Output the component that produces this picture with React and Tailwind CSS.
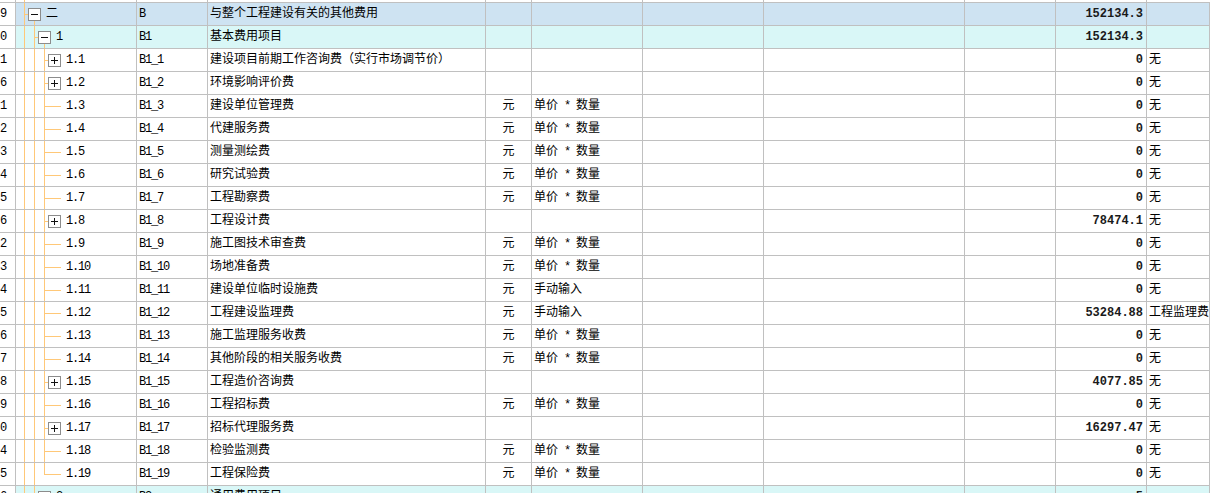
import React from 'react';

const LINE = '#ffc878';
const GRID = 'grid grid-cols-[16px_121px_71px_278px_46px_111px_121px_201px_91px_91px_1fr]';
const CELL = 'h-full border-r border-[#c0c0c0] overflow-hidden whitespace-nowrap flex items-center';

const ROWS = [
  { n: '9', t: '二', lv: 1, box: 'minus', code: 'B', name: '与整个工程建设有关的其他费用', amt: '152134.3', bg: 'bg-[#cee3f2]' },
  { n: '0', t: '1', lv: 2, box: 'minus', code: 'B1', name: '基本费用项目', amt: '152134.3', bg: 'bg-[#d9f7f7]' },
  { n: '1', t: '1.1', lv: 3, box: 'plus', code: 'B1_1', name: '建设项目前期工作咨询费（实行市场调节价）', amt: '0', note: '无' },
  { n: '6', t: '1.2', lv: 3, box: 'plus', code: 'B1_2', name: '环境影响评价费', amt: '0', note: '无' },
  { n: '1', t: '1.3', lv: 3, code: 'B1_3', name: '建设单位管理费', unit: '元', expr: '单价 * 数量', amt: '0', note: '无' },
  { n: '2', t: '1.4', lv: 3, code: 'B1_4', name: '代建服务费', unit: '元', expr: '单价 * 数量', amt: '0', note: '无' },
  { n: '3', t: '1.5', lv: 3, code: 'B1_5', name: '测量测绘费', unit: '元', expr: '单价 * 数量', amt: '0', note: '无' },
  { n: '4', t: '1.6', lv: 3, code: 'B1_6', name: '研究试验费', unit: '元', expr: '单价 * 数量', amt: '0', note: '无' },
  { n: '5', t: '1.7', lv: 3, code: 'B1_7', name: '工程勘察费', unit: '元', expr: '单价 * 数量', amt: '0', note: '无' },
  { n: '6', t: '1.8', lv: 3, box: 'plus', code: 'B1_8', name: '工程设计费', amt: '78474.1', note: '无' },
  { n: '2', t: '1.9', lv: 3, code: 'B1_9', name: '施工图技术审查费', unit: '元', expr: '单价 * 数量', amt: '0', note: '无' },
  { n: '3', t: '1.10', lv: 3, code: 'B1_10', name: '场地准备费', unit: '元', expr: '单价 * 数量', amt: '0', note: '无' },
  { n: '4', t: '1.11', lv: 3, code: 'B1_11', name: '建设单位临时设施费', unit: '元', expr: '手动输入', amt: '0', note: '无' },
  { n: '5', t: '1.12', lv: 3, code: 'B1_12', name: '工程建设监理费', unit: '元', expr: '手动输入', amt: '53284.88', note: '工程监理费' },
  { n: '6', t: '1.13', lv: 3, code: 'B1_13', name: '施工监理服务收费', unit: '元', expr: '单价 * 数量', amt: '0', note: '无' },
  { n: '7', t: '1.14', lv: 3, code: 'B1_14', name: '其他阶段的相关服务收费', unit: '元', expr: '单价 * 数量', amt: '0', note: '无' },
  { n: '8', t: '1.15', lv: 3, box: 'plus', code: 'B1_15', name: '工程造价咨询费', amt: '4077.85', note: '无' },
  { n: '9', t: '1.16', lv: 3, code: 'B1_16', name: '工程招标费', unit: '元', expr: '单价 * 数量', amt: '0', note: '无' },
  { n: '0', t: '1.17', lv: 3, box: 'plus', code: 'B1_17', name: '招标代理服务费', amt: '16297.47', note: '无' },
  { n: '4', t: '1.18', lv: 3, code: 'B1_18', name: '检验监测费', unit: '元', expr: '单价 * 数量', amt: '0', note: '无' },
  { n: '5', t: '1.19', lv: 3, last: true, code: 'B1_19', name: '工程保险费', unit: '元', expr: '单价 * 数量', amt: '0', note: '无' },
  { n: '6', t: '2', lv: 2, box: 'plus', code: 'B2', name: '通用费用项目', amt: '5', bg: 'bg-[#d9f7f7]' },
];

function TreeLines({ lv, box, last }) {
  const w = 20 + lv * 10;
  const px = 8 + (lv - 1) * 10; // parent line
  const bx = px + 4; // box left
  return (
    <svg width={w} height="22" className="shrink-0">
      <line x1="8.5" y1="0" x2="8.5" y2="22" stroke={LINE} />
      {lv >= 2 && <line x1="18.5" y1="0" x2="18.5" y2="22" stroke={LINE} />}
      {lv === 3 && <line x1="28.5" y1="0" x2="28.5" y2={last ? 12 : 22} stroke={LINE} />}
      {box === 'minus' && <line x1={bx + 6.5} y1="17" x2={bx + 6.5} y2="22" stroke={LINE} />}
      {box ? (
        <g>
          <line x1={px} y1="11.5" x2={bx} y2="11.5" stroke={LINE} />
          <rect x={bx + 0.5} y="5.5" width="12" height="12" fill="#fff" stroke="#8c8c8c" />
          <line x1={bx + 3} y1="11.5" x2={bx + 10} y2="11.5" stroke="#111" />
          {box === 'plus' && <line x1={bx + 6.5} y1="8" x2={bx + 6.5} y2="15" stroke="#111" />}
        </g>
      ) : (
        <line x1={px} y1="11.5" x2={px + 17} y2="11.5" stroke={LINE} />
      )}
    </svg>
  );
}

function Row({ r }) {
  const bg = r.bg || 'bg-white';
  return (
    <div className={`${GRID} h-[23px] border-t border-[#c0c0c0]`}>
      <div className={`${CELL} bg-white`}>
        <span>{r.n}</span>
      </div>
      <div className={`${CELL} ${bg}`}>
        <TreeLines lv={r.lv} box={r.box} last={r.last} />
        <span className="tracking-[-1.2px]">{r.t}</span>
      </div>
      <div className={`${CELL} ${bg} pl-[2px]`}>
        <span className="tracking-[-1.2px]">{r.code}</span>
      </div>
      <div className={`${CELL} ${bg} pl-[2px]`}>{r.name}</div>
      <div className={`${CELL} ${bg} justify-center`}>{r.unit}</div>
      <div className={`${CELL} ${bg} pl-[2px]`}>
        {r.expr && r.expr.includes('*') ? (
          <span>单价<span className="tracking-[-1.2px]"> * </span>数量</span>
        ) : r.expr}
      </div>
      <div className={`${CELL} ${bg}`} />
      <div className={`${CELL} ${bg}`} />
      <div className={`${CELL} ${bg}`} />
      <div className={`${CELL} ${bg} justify-end pr-[3px] font-bold text-[#1a1a1a]`}>{r.amt}</div>
      <div className={`${CELL} ${bg} pl-[2px]`}>{r.note}</div>
    </div>
  );
}

export default function App() {
  return (
    <div className="w-[1210px] h-[493px] overflow-hidden bg-white text-black text-[12px] font-['Liberation_Mono','Noto_Sans_CJK_SC',monospace]">
      <div className={`${GRID} h-[2px]`}>
        <div className="h-full border-r border-[#c0c0c0]" />
        <div className="h-full border-r border-[#c0c0c0] pl-[8px]">
          <div className="w-px h-full bg-[#ffc878]" />
        </div>
        <div className="h-full border-r border-[#c0c0c0]" />
        <div className="h-full border-r border-[#c0c0c0]" />
        <div className="h-full border-r border-[#c0c0c0]" />
        <div className="h-full border-r border-[#c0c0c0]" />
        <div className="h-full border-r border-[#c0c0c0]" />
        <div className="h-full border-r border-[#c0c0c0]" />
        <div className="h-full border-r border-[#c0c0c0]" />
        <div className="h-full border-r border-[#c0c0c0]" />
        <div className="h-full" />
      </div>
      {ROWS.map((r, i) => <Row key={i} r={r} />)}
    </div>
  );
}
